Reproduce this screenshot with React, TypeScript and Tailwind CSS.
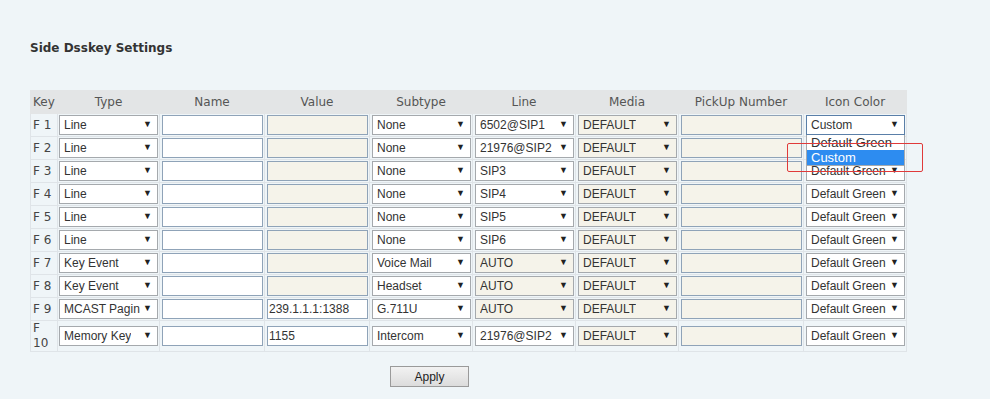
import React from 'react';

type Row = {
  key: string;
  type: string;
  value: string;
  subtype: string;
  line: string;
  lineDisabled: boolean;
  color: string;
};

const rows: Row[] = [
  { key: 'F 1', type: 'Line', value: '', subtype: 'None', line: '6502@SIP1', lineDisabled: false, color: 'Custom' },
  { key: 'F 2', type: 'Line', value: '', subtype: 'None', line: '21976@SIP2', lineDisabled: false, color: 'Default Green' },
  { key: 'F 3', type: 'Line', value: '', subtype: 'None', line: 'SIP3', lineDisabled: false, color: 'Default Green' },
  { key: 'F 4', type: 'Line', value: '', subtype: 'None', line: 'SIP4', lineDisabled: false, color: 'Default Green' },
  { key: 'F 5', type: 'Line', value: '', subtype: 'None', line: 'SIP5', lineDisabled: false, color: 'Default Green' },
  { key: 'F 6', type: 'Line', value: '', subtype: 'None', line: 'SIP6', lineDisabled: false, color: 'Default Green' },
  { key: 'F 7', type: 'Key Event', value: '', subtype: 'Voice Mail', line: 'AUTO', lineDisabled: true, color: 'Default Green' },
  { key: 'F 8', type: 'Key Event', value: '', subtype: 'Headset', line: 'AUTO', lineDisabled: true, color: 'Default Green' },
  { key: 'F 9', type: 'MCAST Pagin', value: '239.1.1.1:1388', subtype: 'G.711U', line: 'AUTO', lineDisabled: true, color: 'Default Green' },
  { key: 'F 10', type: 'Memory Key', value: '1155', subtype: 'Intercom', line: '21976@SIP2', lineDisabled: false, color: 'Default Green' },
];

const headers = ['Key', 'Type', 'Name', 'Value', 'Subtype', 'Line', 'Media', 'PickUp Number', 'Icon Color'];

function Select({ text, disabled }: { text: string; disabled?: boolean }) {
  return (
    <div
      className={`flex h-[20px] w-full items-center justify-between border border-[#a5a9ad] pl-[4px] pr-[5px] text-[12px] text-[#333] ${
        disabled ? 'bg-[#f5f3ea]' : 'bg-white'
      }`}
    >
      <span className="overflow-hidden whitespace-nowrap">{text}</span>
      <span className="text-[9px] text-[#222]">▼</span>
    </div>
  );
}

function Input({ text, disabled }: { text: string; disabled?: boolean }) {
  return (
    <div
      className={`flex h-[20px] w-full items-center border border-[#8fa3b8] pl-[1px] text-[12px] text-[#333] ${
        disabled ? 'bg-[#f5f3ea]' : 'bg-white'
      }`}
    >
      {text}
    </div>
  );
}

const cell = 'border border-[#dfe4e8] px-[1px] py-0 align-middle';

export default function App() {
  return (
    <div className="min-h-screen w-[990px] bg-[#eff5f8] font-['Liberation_Sans',Arial,sans-serif]">
      <div className="px-[30px] pt-[40px]">
        <h2 className="font-['DejaVu_Sans',Verdana,sans-serif] text-[12px] font-bold leading-[16px] text-[#333]">
          Side Dsskey Settings
        </h2>

        <table className="mt-[34px] table-fixed border-collapse">
          <colgroup>
            <col className="w-[27px]" />
            <col className="w-[102px]" />
            <col className="w-[105px]" />
            <col className="w-[105px]" />
            <col className="w-[103px]" />
            <col className="w-[103px]" />
            <col className="w-[103px]" />
            <col className="w-[125px]" />
            <col className="w-[103px]" />
          </colgroup>
          <thead>
            <tr className="h-[23px] bg-[#e3e5e6]">
              {headers.map((h, i) => (
                <th
                  key={h}
                  className={`border border-[#e3e5e6] px-[2px] font-['DejaVu_Sans',Verdana,sans-serif] text-[12px] font-normal text-[#555] ${
                    i === 0 ? 'text-left' : 'text-center'
                  }`}
                >
                  {h}
                </th>
              ))}
            </tr>
          </thead>
          <tbody>
            {rows.map((r, idx) => (
              <tr key={r.key} className={idx === 9 ? 'h-[30px]' : 'h-[23px]'}>
                <td className={`${cell} pl-[2px] font-['DejaVu_Sans',Verdana,sans-serif] text-[12px] leading-[15px] text-[#444]`}>
                  {r.key}
                </td>
                <td className={cell}>
                  <Select text={r.type} />
                </td>
                <td className={`${cell} pl-[2px]`}>
                  <Input text="" />
                </td>
                <td className={`${cell} pl-[2px]`}>
                  <Input text={r.value} disabled={r.value === ''} />
                </td>
                <td className={`${cell} pl-[2px]`}>
                  <Select text={r.subtype} />
                </td>
                <td className={`${cell} pl-[2px]`}>
                  <Select text={r.line} disabled={r.lineDisabled} />
                </td>
                <td className={`${cell} pl-[2px]`}>
                  <Select text="DEFAULT" disabled />
                </td>
                <td className={`${cell} pl-[2px]`}>
                  <Input text="" disabled />
                </td>
                <td className={`${cell} relative pl-[2px]`}>
                  {idx === 0 ? (
                    <div className="flex h-[20px] w-full items-center justify-between border border-[#5a7fa8] bg-white pl-[4px] pr-[5px] text-[12px] text-[#333]">
                      <span>Custom</span>
                      <span className="text-[9px] text-[#222]">▼</span>
                    </div>
                  ) : idx === 1 ? (
                    <div className="h-[20px] w-full" />
                  ) : (
                    <Select text={r.color} />
                  )}
                  {idx === 0 && (
                    <div className="absolute left-[2px] top-[21px] z-10 w-[99px] border border-t-0 border-[#a5a9ad] bg-white text-[13px] leading-[15px]">
                      <div className="px-[4px] text-[#333]">Default Green</div>
                      <div className="bg-[#2d8cf0] px-[4px] text-white">Custom</div>
                    </div>
                  )}
                </td>
              </tr>
            ))}
          </tbody>
        </table>

        <div className="relative">
          <div className="pointer-events-none absolute left-[757px] top-[-209px] z-20 h-[29px] w-[136px] rounded-[2px] border border-[#e03a3a]" />
        </div>

        <div className="mt-[14px] flex">
          <button className="ml-[360px] h-[21px] w-[79px] border border-[#9a9a9a] bg-gradient-to-b from-[#f2f2f2] to-[#dcdcdc] text-[12px] text-[#222]">
            Apply
          </button>
        </div>
      </div>
    </div>
  );
}
